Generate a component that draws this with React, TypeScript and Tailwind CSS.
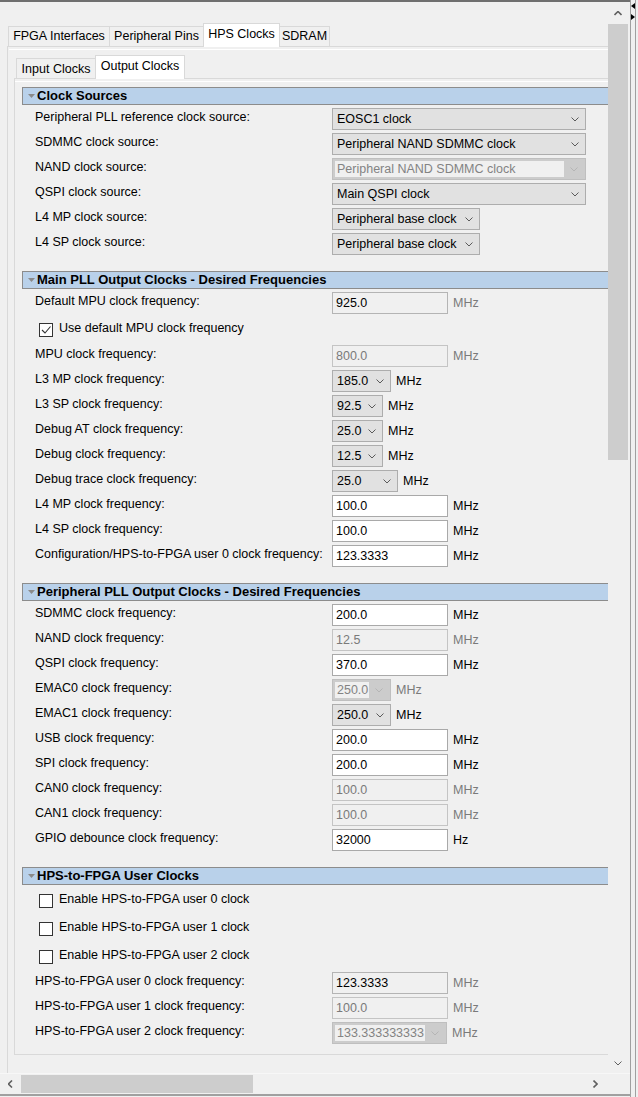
import clsx from "clsx";

const font = "font-['Liberation_Sans',Arial,sans-serif] text-[12.5px]";

function Chevron({ color = "#5a5a5a", dir = "down" }: { color?: string; dir?: "down" | "up" | "left" | "right" }) {
  const pts =
    dir === "down" ? "0.5,0.5 4,4 7.5,0.5" : dir === "up" ? "0.5,4 4,0.5 7.5,4" : dir === "left" ? "4,0.5 0.5,4 4,7.5" : "0.5,0.5 4,4 0.5,7.5";
  const horiz = dir === "left" || dir === "right";
  return (
    <svg width={horiz ? 5 : 8} height={horiz ? 8 : 5} viewBox={horiz ? "0 0 5 8" : "0 0 8 5"} className="shrink-0">
      <polyline points={pts} fill="none" stroke={color} strokeWidth={horiz || dir === "up" ? 1.6 : 1} />
    </svg>
  );
}

function Combo({ value, className, disabled }: { value: string; className: string; disabled?: boolean }) {
  if (disabled) {
    return (
      <div className={clsx("flex h-[22px] shrink-0 border border-[#bfbfbf] bg-[#cccccc] p-[2px]", className)}>
        <span className="flex flex-1 items-center overflow-hidden bg-[#f0f0f0] pl-[2px] text-[#838383] whitespace-nowrap">{value}</span>
        <span className="flex w-[19px] items-center justify-center">
          <Chevron color="#b5b5b5" />
        </span>
      </div>
    );
  }
  return (
    <div className={clsx("flex h-[22px] shrink-0 items-center border border-[#adadad] bg-[#e1e1e1] pl-[4px] pr-[6px]", className)}>
      <span className="flex-1 whitespace-nowrap">{value}</span>
      <Chevron />
    </div>
  );
}

function Field({ value, mode }: { value: string; mode: "edit" | "ro" | "off" }) {
  return (
    <div
      className={clsx(
        "flex h-[22px] w-[116px] shrink-0 items-center border px-[3px]",
        mode === "edit" && "border-[#a9a9a9] bg-white text-black",
        mode === "ro" && "border-[#b4b4b4] bg-[#f0f0f0] text-black",
        mode === "off" && "border-[#c4c4c4] bg-[#f0f0f0] text-[#7a7a7a]"
      )}
    >
      {value}
    </div>
  );
}

function Unit({ text = "MHz", off }: { text?: string; off?: boolean }) {
  return <span className={clsx("ml-[5px]", off ? "text-[#7a7a7a]" : "text-black")}>{text}</span>;
}

function Row({ label, children }: { label: string; children: React.ReactNode }) {
  return (
    <div className="flex h-[22px] items-center">
      <span className="w-[297px] shrink-0 whitespace-nowrap pb-[3px]">{label}</span>
      {children}
    </div>
  );
}

function Check({ label, checked }: { label: string; checked?: boolean }) {
  return (
    <div className="flex h-[25px] items-center gap-[6px] pl-[4px]">
      <span className="flex h-[14px] w-[14px] items-center justify-center border border-[#333333] bg-white">
        {checked && (
          <svg width="12" height="12" viewBox="0 0 12 12">
            <polyline points="2,6 5,9 10.5,2.5" fill="none" stroke="#333" strokeWidth="1.1" />
          </svg>
        )}
      </span>
      <span className="pb-[2px]">{label}</span>
    </div>
  );
}

function Section({ title, children, first }: { title: string; children: React.ReactNode; first?: boolean }) {
  return (
    <div className={first ? "" : "mt-[16px]"}>
      <div className="flex h-[18px] items-center gap-[2px] border border-r-0 border-[#8c8c8c] bg-[#b9d1ea] pl-[5px]">
        <svg width="7" height="4" viewBox="0 0 7 4">
          <polygon points="0,0 7,0 3.5,4" fill="#8a8a8a" />
        </svg>
        <span className="text-[13px] font-bold text-black">{title}</span>
      </div>
      <div className="flex flex-col gap-[3px] pl-[13px] pt-[3px]">{children}</div>
    </div>
  );
}

function Tab({ label, w, selected, inner }: { label: string; w: string; selected?: boolean; inner?: boolean }) {
  return (
    <div
      className={clsx(
        "flex items-center justify-center border border-b-0 border-[#d9d9d9] whitespace-nowrap",
        w,
        selected ? "z-10 -mb-[1px] h-[24px] bg-white pb-[3px]" : inner ? "h-[20px] bg-[#f0f0f0] pt-[1px]" : "h-[20px] bg-[#f0f0f0]"
      )}
    >
      {label}
    </div>
  );
}

export default function App() {
  return (
    <div className={clsx("flex h-[1097px] w-[638px] overflow-hidden bg-[#f0f0f0] text-black", font)}>
      {/* main area */}
      <div className="flex w-[630px] flex-col">
        <div className="h-[2px] bg-[#6f6f6f]" />
        <div className="flex h-[1071px]">
          {/* viewport */}
          <div className="w-[608px] overflow-hidden">
            <div className="w-[720px] pl-[7px] pt-[21px]">
              <div className="flex items-end pl-[1px]">
                <Tab label="FPGA Interfaces" w="w-[102px]" />
                <Tab label="Peripheral Pins" w="w-[95px] -ml-[1px]" />
                <Tab label="HPS Clocks" w="w-[77px] -ml-[1px]" selected />
                <Tab label="SDRAM" w="w-[51px] -ml-[1px]" />
              </div>
              <div className="h-[1100px] border-l border-t border-[#d9d9d9]">
                <div className="ml-[1px] mt-[2px] h-full border-t border-white pl-[5px] pt-[5px]">
                  <div className="flex items-end pl-[2px]">
                    <Tab label="Input Clocks" w="w-[80px]" inner />
                    <Tab label="Output Clocks" w="w-[90px] -ml-[1px]" selected />
                  </div>
                  <div className="border-b border-l border-t border-[#d9d9d9]">
                    <div className="mt-[2px] border-t border-white pb-[10px] pl-[7px] pt-[5px]">
                      <Section title="Clock Sources" first>
                        <Row label="Peripheral PLL reference clock source:">
                          <Combo value="EOSC1 clock" className="w-[254px]" />
                        </Row>
                        <Row label="SDMMC clock source:">
                          <Combo value="Peripheral NAND SDMMC clock" className="w-[254px]" />
                        </Row>
                        <Row label="NAND clock source:">
                          <Combo value="Peripheral NAND SDMMC clock" className="w-[254px]" disabled />
                        </Row>
                        <Row label="QSPI clock source:">
                          <Combo value="Main QSPI clock" className="w-[254px]" />
                        </Row>
                        <Row label="L4 MP clock source:">
                          <Combo value="Peripheral base clock" className="w-[148px]" />
                        </Row>
                        <Row label="L4 SP clock source:">
                          <Combo value="Peripheral base clock" className="w-[148px]" />
                        </Row>
                      </Section>

                      <Section title="Main PLL Output Clocks - Desired Frequencies">
                        <Row label="Default MPU clock frequency:">
                          <Field value="925.0" mode="ro" />
                          <Unit off />
                        </Row>
                        <Check label="Use default MPU clock frequency" checked />
                        <Row label="MPU clock frequency:">
                          <Field value="800.0" mode="off" />
                          <Unit off />
                        </Row>
                        <Row label="L3 MP clock frequency:">
                          <Combo value="185.0" className="w-[59px]" />
                          <Unit />
                        </Row>
                        <Row label="L3 SP clock frequency:">
                          <Combo value="92.5" className="w-[51px]" />
                          <Unit />
                        </Row>
                        <Row label="Debug AT clock frequency:">
                          <Combo value="25.0" className="w-[51px]" />
                          <Unit />
                        </Row>
                        <Row label="Debug clock frequency:">
                          <Combo value="12.5" className="w-[51px]" />
                          <Unit />
                        </Row>
                        <Row label="Debug trace clock frequency:">
                          <Combo value="25.0" className="w-[66px]" />
                          <Unit />
                        </Row>
                        <Row label="L4 MP clock frequency:">
                          <Field value="100.0" mode="edit" />
                          <Unit />
                        </Row>
                        <Row label="L4 SP clock frequency:">
                          <Field value="100.0" mode="edit" />
                          <Unit />
                        </Row>
                        <Row label="Configuration/HPS-to-FPGA user 0 clock frequency:">
                          <Field value="123.3333" mode="edit" />
                          <Unit />
                        </Row>
                      </Section>

                      <Section title="Peripheral PLL Output Clocks - Desired Frequencies">
                        <Row label="SDMMC clock frequency:">
                          <Field value="200.0" mode="edit" />
                          <Unit />
                        </Row>
                        <Row label="NAND clock frequency:">
                          <Field value="12.5" mode="off" />
                          <Unit off />
                        </Row>
                        <Row label="QSPI clock frequency:">
                          <Field value="370.0" mode="edit" />
                          <Unit />
                        </Row>
                        <Row label="EMAC0 clock frequency:">
                          <Combo value="250.0" className="w-[59px]" disabled />
                          <Unit off />
                        </Row>
                        <Row label="EMAC1 clock frequency:">
                          <Combo value="250.0" className="w-[59px]" />
                          <Unit />
                        </Row>
                        <Row label="USB clock frequency:">
                          <Field value="200.0" mode="edit" />
                          <Unit />
                        </Row>
                        <Row label="SPI clock frequency:">
                          <Field value="200.0" mode="edit" />
                          <Unit />
                        </Row>
                        <Row label="CAN0 clock frequency:">
                          <Field value="100.0" mode="off" />
                          <Unit off />
                        </Row>
                        <Row label="CAN1 clock frequency:">
                          <Field value="100.0" mode="off" />
                          <Unit off />
                        </Row>
                        <Row label="GPIO debounce clock frequency:">
                          <Field value="32000" mode="edit" />
                          <Unit text="Hz" />
                        </Row>
                      </Section>

                      <Section title="HPS-to-FPGA User Clocks">
                        <Check label="Enable HPS-to-FPGA user 0 clock" />
                        <Check label="Enable HPS-to-FPGA user 1 clock" />
                        <Check label="Enable HPS-to-FPGA user 2 clock" />
                        <Row label="HPS-to-FPGA user 0 clock frequency:">
                          <Field value="123.3333" mode="ro" />
                          <Unit off />
                        </Row>
                        <Row label="HPS-to-FPGA user 1 clock frequency:">
                          <Field value="100.0" mode="off" />
                          <Unit off />
                        </Row>
                        <Row label="HPS-to-FPGA user 2 clock frequency:">
                          <Combo value="133.333333333" className="w-[115px]" disabled />
                          <Unit off />
                        </Row>
                      </Section>
                    </div>
                  </div>
                </div>
              </div>
            </div>
          </div>
          {/* vertical scrollbar */}
          <div className="flex w-[20px] flex-col pt-[1px]">
            <div className="flex h-[20px] items-center justify-center">
              <Chevron dir="up" color="#606060" />
            </div>
            <div className="mt-[1px] h-[436px] bg-[#cdcdcd]" />
            <div className="flex-1" />
            <div className="flex h-[20px] items-center justify-center">
              <Chevron color="#606060" />
            </div>
          </div>
        </div>
        {/* horizontal scrollbar */}
        <div className="flex h-[21px] border-t border-[#f7f7f7]">
          <div className="flex w-[608px] items-center">
            <div className="flex w-[21px] items-center justify-center">
              <Chevron dir="left" color="#606060" />
            </div>
            <div className="h-[18px] w-[232px] bg-[#cdcdcd]" />
            <div className="flex-1" />
            <div className="flex w-[26px] items-center justify-center">
              <Chevron dir="right" color="#606060" />
            </div>
          </div>
        </div>
        <div className="h-[2px] bg-[#a0a0a0]" />
      </div>
      {/* split pane edge */}
      <div className="flex w-[8px]">
        <div className="w-[1px] bg-[#a0a0a0]" />
        <div className="flex w-[4px] flex-col items-center gap-[5px] pt-[3px]">
          <svg width="4" height="6" viewBox="0 0 4 6">
            <polygon points="4,0 0,3 4,6" fill="#000" />
          </svg>
          <svg width="4" height="6" viewBox="0 0 4 6">
            <polygon points="0,0 4,3 0,6" fill="#000" />
          </svg>
        </div>
        <div className="w-[1px] bg-[#a0a0a0]" />
      </div>
    </div>
  );
}
